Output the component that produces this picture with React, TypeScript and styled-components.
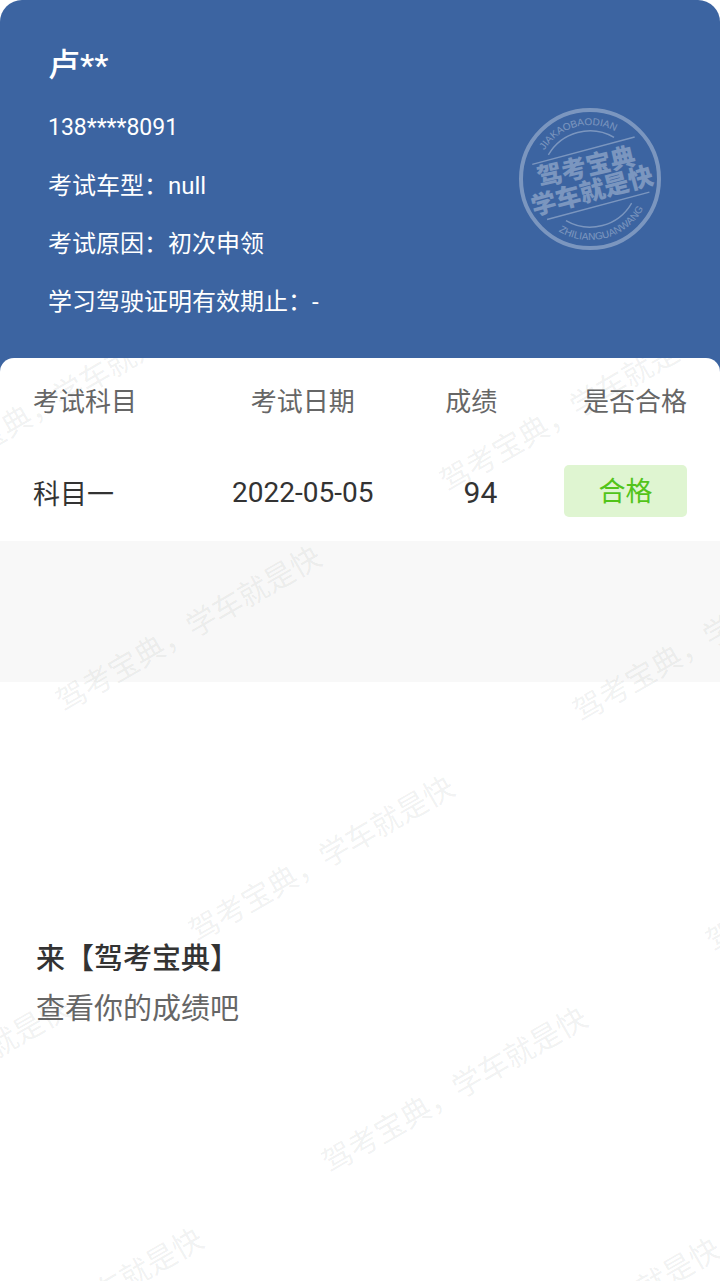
import React from 'react';
import styled, { createGlobalStyle } from 'styled-components';

const GlobalStyle = createGlobalStyle`
  *, *::before, *::after { box-sizing: border-box; }
  body {
    margin: 0;
    background: #ffffff;
    color: #333333;
    font-family: Roboto, "Noto Sans CJK SC", sans-serif;
  }
`;

const Page = styled.main`
  display: flex;
  flex-direction: column;
  min-height: 100vh;
`;

const Profile = styled.header`
  display: flex;
  align-items: flex-start;
  justify-content: space-between;
  padding: 45px 59px 61px 48px;
  border-radius: 22px 22px 0 0;
  background: #3c64a1;
  color: #ffffff;
`;

const Name = styled.h1`
  margin: 0 0 28px;
  font-size: 32px;
  line-height: 40px;
  font-weight: 500;
`;

const InfoList = styled.ul`
  display: flex;
  flex-direction: column;
  gap: 28px;
  margin: 0;
  padding: 0;
  list-style: none;
`;

const InfoItem = styled.li<{ $compact?: boolean }>`
  font-size: ${(p) => (p.$compact ? 23 : 24)}px;
  line-height: 30px;
`;

const SealDrawing = styled.svg`
  flex: none;
  width: 142px;
  height: 142px;
  margin-top: 63px;
  opacity: 0.32;
`;

const Sheet = styled.section`
  position: relative;
  flex: 1;
  margin-top: -20px;
  border-radius: 14px 14px 0 0;
  background: #ffffff;
  overflow: hidden;
`;

const TableArea = styled.div`
  padding: 0 33px;
`;

const ScoreTable = styled.table`
  width: 100%;
  table-layout: fixed;
  border-collapse: collapse;
`;

type Align = 'left' | 'center' | 'right';

const HeadCell = styled.th<{ $align: Align; $width: string }>`
  width: ${(p) => p.$width};
  height: 86px;
  padding: 0 0 4px;
  color: #666666;
  font-size: 26px;
  font-weight: 400;
  text-align: ${(p) => p.$align};
  white-space: nowrap;
`;

const sizes = { small: 27, medium: 28, large: 30 };

const Cell = styled.td<{ $align: Align; $size?: keyof typeof sizes }>`
  height: 97px;
  padding: 0;
  font-size: ${(p) => sizes[p.$size ?? 'small']}px;
  text-align: ${(p) => p.$align};
  white-space: nowrap;
`;

const Badge = styled.span`
  display: block;
  width: 123px;
  margin: 0 0 3px auto;
  padding-top: 3px;
  border-radius: 5px;
  background: #dff5d1;
  color: #52c41a;
  line-height: 49px;
  text-align: center;
`;

const Band = styled.div`
  height: 141px;
  background: #f8f8f8;
`;

const Invite = styled.footer`
  padding: 252px 36px 0;
  font-size: 29px;
  line-height: 50px;
`;

const InviteTitle = styled.h2`
  margin: 0;
  font-size: inherit;
  font-weight: 500;
`;

const InviteText = styled.p`
  margin: 0;
  color: #666666;
`;

const WatermarkLayer = styled.div`
  position: absolute;
  inset: 0;
  overflow: hidden;
  pointer-events: none;
  user-select: none;
`;

const Watermark = styled.span<{ $x: number; $y: number }>`
  position: absolute;
  left: ${(p) => p.$x}px;
  top: ${(p) => p.$y}px;
  color: rgba(60, 75, 70, 0.08);
  font-size: 30px;
  line-height: 40px;
  white-space: nowrap;
  transform: rotate(-30deg);
  transform-origin: 15px 50%;
`;

const info = ['考试车型：null', '考试原因：初次申领', '学习驾驶证明有效期止：-'];

const columns: { label: string; align: Align; width: string }[] = [
  { label: '考试科目', align: 'left', width: '26%' },
  { label: '考试日期', align: 'center', width: '30.5%' },
  { label: '成绩', align: 'right', width: '14.5%' },
  { label: '是否合格', align: 'right', width: '29%' },
];

const marks = [
  [-76, 89],
  [441, 99],
  [57, 319],
  [574, 329],
  [190, 549],
  [707, 559],
  [-194, 770],
  [323, 780],
  [-61, 1001],
  [456, 1011],
];

function Seal() {
  return (
    <SealDrawing viewBox="-71 -71 142 142" role="img" aria-label="驾考宝典 学车就是快">
      <defs>
        <path id="seal-top" d="M-54 0A54 54 0 0 1 54 0" />
        <path id="seal-bottom" d="M-61 0A61 61 0 0 0 61 0" />
      </defs>
      <circle r="69" fill="none" stroke="#fff" strokeWidth="4" />
      <g transform="rotate(-15)" fill="#fff" textAnchor="middle">
        <g fill="none" stroke="#fff" strokeWidth="1.4">
          <path d="M-34 -34A48 48 0 0 1 34 -34" />
          <path d="M-34 34A48 48 0 0 0 34 34" />
          <path d="M-52 -29H54M-52 28H54" />
        </g>
        <g fontFamily='"Noto Sans CJK SC", sans-serif' fontSize="25" fontWeight="900">
          <text x="-1" y="-4" transform="rotate(2)">驾考宝典</text>
          <text x="-1" y="21">学车就是快</text>
        </g>
        <g fontFamily='"Liberation Sans", sans-serif' fontSize="10">
          <text>
            <textPath href="#seal-top" startOffset="50%">JIAKAOBAODIAN</textPath>
          </text>
          <text>
            <textPath href="#seal-bottom" startOffset="50%">ZHILIANGUANWANG</textPath>
          </text>
        </g>
      </g>
    </SealDrawing>
  );
}

export default function App() {
  return (
    <Page>
      <GlobalStyle />
      <Profile>
        <div>
          <Name>卢**</Name>
          <InfoList>
            <InfoItem $compact>138****8091</InfoItem>
            {info.map((line) => (
              <InfoItem key={line}>{line}</InfoItem>
            ))}
          </InfoList>
        </div>
        <Seal />
      </Profile>
      <Sheet>
        <TableArea>
          <ScoreTable>
            <thead>
              <tr>
                {columns.map((c) => (
                  <HeadCell key={c.label} scope="col" $align={c.align} $width={c.width}>
                    {c.label}
                  </HeadCell>
                ))}
              </tr>
            </thead>
            <tbody>
              <tr>
                <Cell $align="left">科目一</Cell>
                <Cell $align="center" $size="medium">2022-05-05</Cell>
                <Cell $align="right" $size="large">94</Cell>
                <Cell $align="right">
                  <Badge>合格</Badge>
                </Cell>
              </tr>
            </tbody>
          </ScoreTable>
        </TableArea>
        <Band />
        <Invite>
          <InviteTitle>来【驾考宝典】</InviteTitle>
          <InviteText>查看你的成绩吧</InviteText>
        </Invite>
        <WatermarkLayer aria-hidden="true">
          {marks.map(([x, y]) => (
            <Watermark key={`${x},${y}`} $x={x} $y={y}>
              驾考宝典，学车就是快
            </Watermark>
          ))}
        </WatermarkLayer>
      </Sheet>
    </Page>
  );
}
